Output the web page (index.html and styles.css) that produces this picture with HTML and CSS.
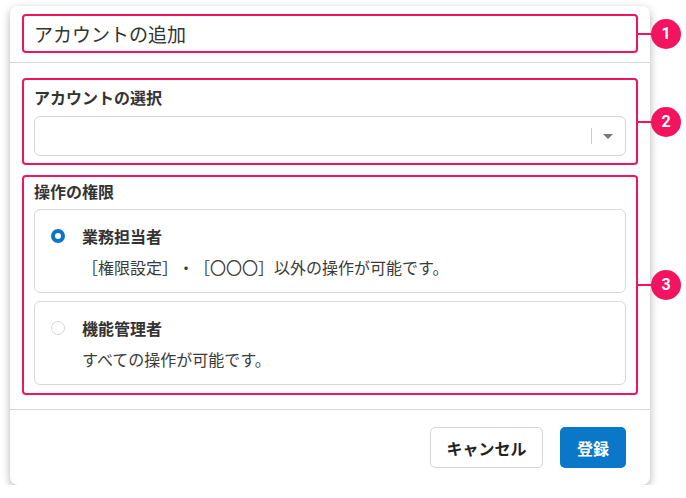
FILE: index.html
```html
<!DOCTYPE html>
<html lang="ja">
<head>
  <meta charset="UTF-8" />
  <meta name="viewport" content="width=device-width, initial-scale=1.0"/>
  <title>アカウントの追加</title>
  <link rel="stylesheet" href="styles.css">
</head>
<body>
  <div class="modal">
    <div class="modal-header">
      <div class="mark mark-title" data-no="1">
        <h2>アカウントの追加</h2>
      </div>
    </div>

    <div class="modal-body">
      <div class="mark mark-select" data-no="2">
        <label class="field-label">アカウントの選択</label>
        <div class="select">
          <span class="select-sep"></span>
          <span class="select-caret"></span>
        </div>
      </div>

      <div class="mark mark-role" data-no="3">
        <div class="field-label role-label">操作の権限</div>
        <div class="option">
          <span class="radio checked"></span>
          <div class="option-text">
            <div class="option-title">業務担当者</div>
            <div class="option-desc">［権限設定］・［〇〇〇］以外の操作が可能です。</div>
          </div>
        </div>
        <div class="option">
          <span class="radio"></span>
          <div class="option-text">
            <div class="option-title">機能管理者</div>
            <div class="option-desc">すべての操作が可能です。</div>
          </div>
        </div>
      </div>
    </div>

    <div class="modal-footer">
      <button class="btn btn-cancel">キャンセル</button>
      <button class="btn btn-primary">登録</button>
    </div>
  </div>
</body>
</html>
```

FILE: styles.css
```css
* {
  box-sizing: border-box;
}

body {
  margin: 0;
  padding: 6px 0 0 10px;
  background: #fff;
  font-family: "Noto Sans CJK JP", "Noto Sans", sans-serif;
  color: #333;
  text-spacing-trim: space-all;
}

.modal {
  width: 640px;
  height: 479px;
  background: #fff;
  border-radius: 8px;
  box-shadow: 0 3px 8px rgba(0,0,0,0.3);
}

/* annotation boxes */
.mark {
  position: relative;
  border: 2px solid #f3135f;
  border-radius: 4px;
}

.mark::before {
  content: "";
  position: absolute;
  left: 100%;
  top: 50%;
  width: 18px;
  height: 2px;
  margin-top: -1px;
  background: #f3135f;
}

.mark::after {
  content: attr(data-no);
  position: absolute;
  left: calc(100% + 15px);
  top: 50%;
  width: 30px;
  height: 30px;
  margin-top: -15px;
  border-radius: 50%;
  background: #f3135f;
  color: #fff;
  font-family: Roboto, "Liberation Sans", sans-serif;
  font-weight: bold;
  font-size: 16px;
  line-height: 30px;
  text-align: center;
}

.modal-header {
  padding: 8px 12px 9px;
  border-bottom: 1px solid #d9d9d9;
}

.mark-title {
  height: 39px;
  padding: 0 10px;
}

h2 {
  margin: 0;
  font-size: 19px;
  font-weight: normal;
  line-height: 35px;
}

.modal-body {
  padding: 15px 12px 14px;
}

.field-label {
  display: block;
  font-size: 16px;
  font-weight: bold;
  line-height: 22px;
}

.mark-select {
  height: 87px;
  padding: 6px 10px 0;
  margin-bottom: 10px;
}

.mark-select .field-label {
  margin-bottom: 8px;
}

.select {
  display: flex;
  align-items: center;
  justify-content: flex-end;
  height: 40px;
  border: 1px solid #d6d6d6;
  border-radius: 6px;
  padding-right: 12px;
}

.select-sep {
  width: 1px;
  height: 16px;
  background: #ccc;
  margin-right: 11px;
}

.select-caret {
  width: 0;
  height: 0;
  border-left: 5px solid transparent;
  border-right: 5px solid transparent;
  border-top: 5px solid #777;
}

.mark-role {
  height: 220px;
  padding: 3px 10px 0;
}

.role-label {
  margin-bottom: 7px;
}

.option {
  display: flex;
  height: 84px;
  padding: 15px 15px 0;
  border: 1px solid #d9d9d9;
  border-radius: 6px;
  margin-bottom: 8px;
}

.radio {
  flex: none;
  width: 14px;
  height: 14px;
  margin: 4px 17px 0 1px;
  border-radius: 50%;
  border: 1px solid #d6d6d6;
}

.radio.checked {
  border: 4px solid #0b74c8;
}

.option-title {
  font-size: 16px;
  font-weight: bold;
  line-height: 22px;
}

.option-desc {
  margin-top: 9px;
  font-size: 16px;
  line-height: 22px;
  color: #3a3a3a;
}

.modal-footer {
  display: flex;
  justify-content: flex-end;
  gap: 17px;
  padding: 17px 24px 0;
  border-top: 1px solid #d9d9d9;
}

.btn {
  height: 41px;
  padding: 0 15px;
  border-radius: 5px;
  font-family: "Noto Sans CJK JP", sans-serif;
  font-size: 16px;
  font-weight: bold;
  cursor: pointer;
}

.btn-cancel {
  width: 113px;
  background: #fff;
  border: 1px solid #d6d6d6;
  color: #222;
}

.btn-primary {
  width: 66px;
  background: #0b77c8;
  border: none;
  color: #fff;
}
```
